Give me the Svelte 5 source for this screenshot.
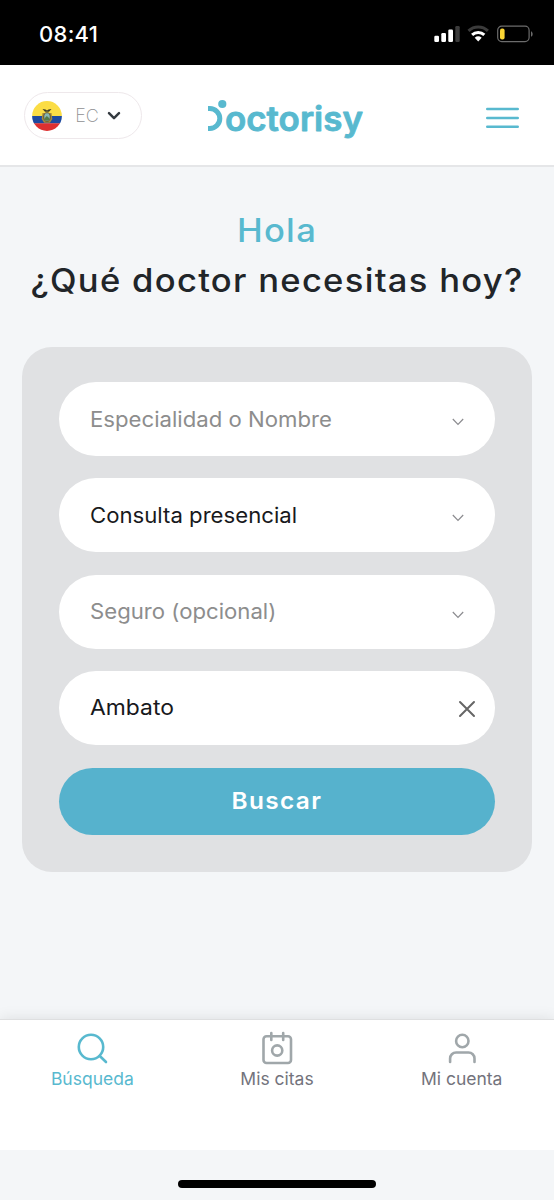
<script lang="ts">
  interface Field {
    id: string
    text: string
    filled: boolean
    clearable?: boolean
  }

  const fields: Field[] = [
    { id: 'specialty', text: 'Especialidad o Nombre', filled: false },
    { id: 'type', text: 'Consulta presencial', filled: true },
    { id: 'insurance', text: 'Seguro (opcional)', filled: false },
    { id: 'city', text: 'Ambato', filled: true, clearable: true },
  ]

  const tabs = [
    { id: 'search', label: 'Búsqueda' },
    { id: 'dates', label: 'Mis citas' },
    { id: 'account', label: 'Mi cuenta' },
  ]

  let active = $state('search')
</script>

<div class="screen">
  <div class="status">
    <span class="time">08:41</span>
    <svg class="indicators" width="100" height="18" viewBox="0 0 100 18">
      <g fill="#fff">
        <rect x="0.3" y="10.8" width="4.7" height="6.2" rx="1.2" />
        <rect x="7.3" y="8" width="4.7" height="9" rx="1.2" />
        <rect x="14.3" y="4.6" width="4.7" height="12.4" rx="1.2" />
        <rect x="21.3" y="1" width="4.4" height="16" rx="1.2" fill="#3b3b3b" />
      </g>
      <g fill="none" stroke-width="3">
        <path d="M34.5 5.9a14.2 14.2 0 0 1 19.4 0" stroke="#3b3b3b" />
        <path d="M38.1 9.8a8.9 8.9 0 0 1 12.2 0" stroke="#fff" />
      </g>
      <path d="M40.7 12.8a5.4 5.4 0 0 1 7 0l-3.5 3.8z" fill="#fff" />
      <rect x="63.7" y="1.2" width="31.4" height="15.4" rx="4" fill="none" stroke="#6c6c6c" stroke-width="1.2" />
      <rect x="66" y="3.5" width="4.6" height="11" rx="2" fill="#fbd534" />
      <path d="M97 6.2c2.2 1 2.2 4.6 0 5.600z" fill="#6c6c6c" />
    </svg>
  </div>

  <header>
    <button class="country">
      <svg width="30" height="30" viewBox="0 0 30 30">
        <defs>
          <clipPath id="flag"><circle cx="15" cy="15" r="14.9" /></clipPath>
        </defs>
        <g clip-path="url(#flag)">
          <rect width="30" height="15" fill="#fbdd45" />
          <rect y="15" width="30" height="7.5" fill="#1d4aa0" />
          <rect y="22.3" width="30" height="8" fill="#dd3030" />
        </g>
        <path d="M10.500 8l3 .5 1.500 1 1.500-1 3-.5-2.500 2.700h-4z" fill="#3d3b28" />
        <path d="M10.500 12h9l.8 6-2.300 3.800h-6l-2.300-3.800z" fill="#a58a3c" />
        <ellipse cx="15" cy="16" rx="3.300" ry="4.300" fill="#86b7b5" stroke="#67542c" />
        <path d="M12.400 17.500l2.400-2.500 2.800 2.500-1 2h-3.200z" fill="#557a46" />
      </svg>
      <span>EC</span>
      <svg width="14" height="10" viewBox="0 0 14 10">
        <path d="M2 2.200l5 4.900 5-4.900" fill="none" stroke="#343a40" stroke-width="2.500" stroke-linecap="round" stroke-linejoin="round" />
      </svg>
    </button>

    <svg class="logo" width="160" height="46" viewBox="0 0 160 46" aria-label="Doctorisy">
      <path d="M1 9.500h1.800a10 10 0 0 1 0 20H1" class="arc" />
      <circle cx="15.300" cy="5" r="4.100" />
      <text x="18" y="31.500" textLength="138" lengthAdjust="spacingAndGlyphs">octorisy</text>
    </svg>

    <button class="menu" aria-label="Menú">
      <svg width="33" height="22" viewBox="0 0 33 22">
        <path d="M1.300 2h30.400M1.300 11h30.400M1.300 19.800h30.400" />
      </svg>
    </button>
  </header>

  <main>
    <h1>Hola</h1>
    <h2>¿Qué doctor necesitas hoy?</h2>

    <form onsubmit={(e) => e.preventDefault()}>
      {#each fields as field (field.id)}
        <div class="field {field.id}" class:filled={field.filled}>
          <span>{field.text}</span>
          {#if field.clearable}
            <svg class="clear" width="18" height="18" viewBox="0 0 18 18">
              <path d="M2 2l14 14M16 2L2 16" fill="none" stroke="#666" stroke-width="2" stroke-linecap="round" />
            </svg>
          {:else}
            <svg class="caret" width="12" height="8" viewBox="0 0 12 8">
              <path d="M.8 1l5.200 5.300L11.200 1" fill="none" stroke="#8b8b8f" stroke-width="1.200" />
            </svg>
          {/if}
        </div>
      {/each}
      <button class="submit"><span>Buscar</span></button>
    </form>
  </main>

  <nav>
    {#each tabs as tab (tab.id)}
      <button class={tab.id} class:active={active === tab.id} onclick={() => (active = tab.id)}>
        <svg width="34" height="36" viewBox="0 0 34 36">
          {#if tab.id === 'search'}
            <circle cx="16" cy="17" r="12.200" />
            <path d="M24.800 26l6.200 6" />
          {:else if tab.id === 'dates'}
            <rect x="3.500" y="6.300" width="27.500" height="26.700" rx="3" />
            <path d="M11.300 3v7M23.200 3v7" />
            <circle cx="17.200" cy="20.500" r="5.100" />
          {:else}
            <circle cx="17.300" cy="11" r="6.200" />
            <path d="M5.100 32v-3.500a6 6 0 0 1 6-6h12.400a6 6 0 0 1 6 6V32" />
          {/if}
        </svg>
        <span>{tab.label}</span>
      </button>
    {/each}
  </nav>

  <div class="home"><i></i></div>
</div>

<style>
  :global(body) {
    margin: 0;
  }

  .screen {
    display: flex;
    flex-direction: column;
    width: 554px;
    height: 1200px;
    overflow: hidden;
    background: #f4f6f8;
    font-family: Inter, 'Liberation Sans', sans-serif;
  }

  button {
    border: none;
    background: none;
    padding: 0;
    font-family: inherit;
  }

  .status {
    display: flex;
    justify-content: space-between;
    box-sizing: border-box;
    height: 65px;
    flex: none;
    padding: 21px 20px 0 39px;
    background: #000;
    color: #fff;
  }

  .time {
    font-size: 22px;
    font-weight: 500;
    line-height: 27px;
    letter-spacing: 0.3px;
  }

  .indicators {
    margin-top: 4px;
  }

  header {
    display: flex;
    align-items: flex-start;
    box-sizing: border-box;
    height: 102px;
    flex: none;
    padding: 27px 35px 0 24px;
    border-bottom: 2px solid #e5e6e8;
    background: #fff;
  }

  .country {
    display: flex;
    align-items: center;
    box-sizing: border-box;
    width: 118px;
    height: 47px;
    padding-left: 7px;
    border: 1px solid #eee8eb;
    border-radius: 24px;
  }

  .country span {
    width: 24px;
    margin: 0 8px 0 13px;
    font-size: 18px;
    font-weight: 200;
    color: #8f8f92;
  }

  .logo {
    margin: 7px 0 0 65px;
    fill: #58b9cf;
  }

  .logo .arc {
    fill: none;
    stroke: #58b9cf;
    stroke-width: 5;
  }

  .logo text {
    font-size: 34px;
    font-weight: 600;
    stroke: #58b9cf;
    stroke-width: 0.8;
    stroke-linejoin: round;
  }

  .menu {
    margin: 15px 0 0 auto;
  }

  .menu svg {
    display: block;
    stroke: #58b9cf;
    stroke-width: 2.6;
    stroke-linecap: round;
  }

  main {
    display: flex;
    flex-direction: column;
    flex: 1;
    padding: 39px 22px 0;
  }

  h1,
  h2 {
    margin: 0;
    font-size: 32px;
    font-weight: 500;
    line-height: 50px;
    letter-spacing: 1.2px;
    text-align: center;
    white-space: nowrap;
    transform: scaleX(1.08);
  }

  h1 {
    color: #58b9cf;
  }

  h2 {
    color: #212529;
  }

  form {
    display: flex;
    flex-direction: column;
    gap: 22.3px;
    box-sizing: border-box;
    height: 525px;
    margin-top: 41px;
    padding: 35px 37px;
    border-radius: 30px;
    background: #e0e1e3;
  }

  .field {
    display: flex;
    align-items: center;
    justify-content: space-between;
    box-sizing: border-box;
    height: 74px;
    flex: none;
    padding: 0 31px;
    border-radius: 37px;
    background: #fff;
    color: #8d8d8d;
    font-size: 21px;
    line-height: 30px;
  }

  .field span {
    padding-top: 1px;
    transform: scaleX(1.055);
    transform-origin: left;
  }

  .field.filled {
    color: #18191c;
  }

  .field.city {
    padding-right: 19px;
  }

  .field.city span {
    transform: scaleX(1.09);
  }

  .caret {
    margin-top: 6px;
  }

  .clear {
    margin-top: 2px;
  }

  .submit {
    height: 67px;
    margin-top: 1px;
    border-radius: 34px;
    background: #56b2cd;
    color: #fff;
    font-size: 23px;
    font-weight: 600;
    letter-spacing: 1.3px;
  }

  .submit span {
    display: inline-block;
    padding-bottom: 1px;
    transform: scaleX(1.06);
  }

  nav {
    display: flex;
    box-sizing: border-box;
    height: 131px;
    flex: none;
    padding-top: 10px;
    border-top: 1px solid #dedfe0;
    background: #fff;
    box-shadow: 0 0 14px rgba(0, 0, 0, 0.1);
    clip-path: inset(-20px 0 0);
  }

  nav button {
    display: flex;
    flex: 1;
    flex-direction: column;
    align-items: center;
    color: #73737c;
    font-size: 17.5px;
    line-height: 26px;
  }

  nav svg {
    fill: none;
    stroke: #a0a7aa;
    stroke-width: 2.6;
    stroke-linecap: round;
    stroke-linejoin: round;
  }

  nav .active {
    color: #58b9cf;
  }

  nav .active svg {
    stroke: #58b9cf;
  }

  .home {
    display: flex;
    justify-content: center;
    height: 50px;
    flex: none;
  }

  .home i {
    width: 198px;
    height: 8px;
    margin-top: 30px;
    border-radius: 4px;
    background: #000;
  }
</style>
